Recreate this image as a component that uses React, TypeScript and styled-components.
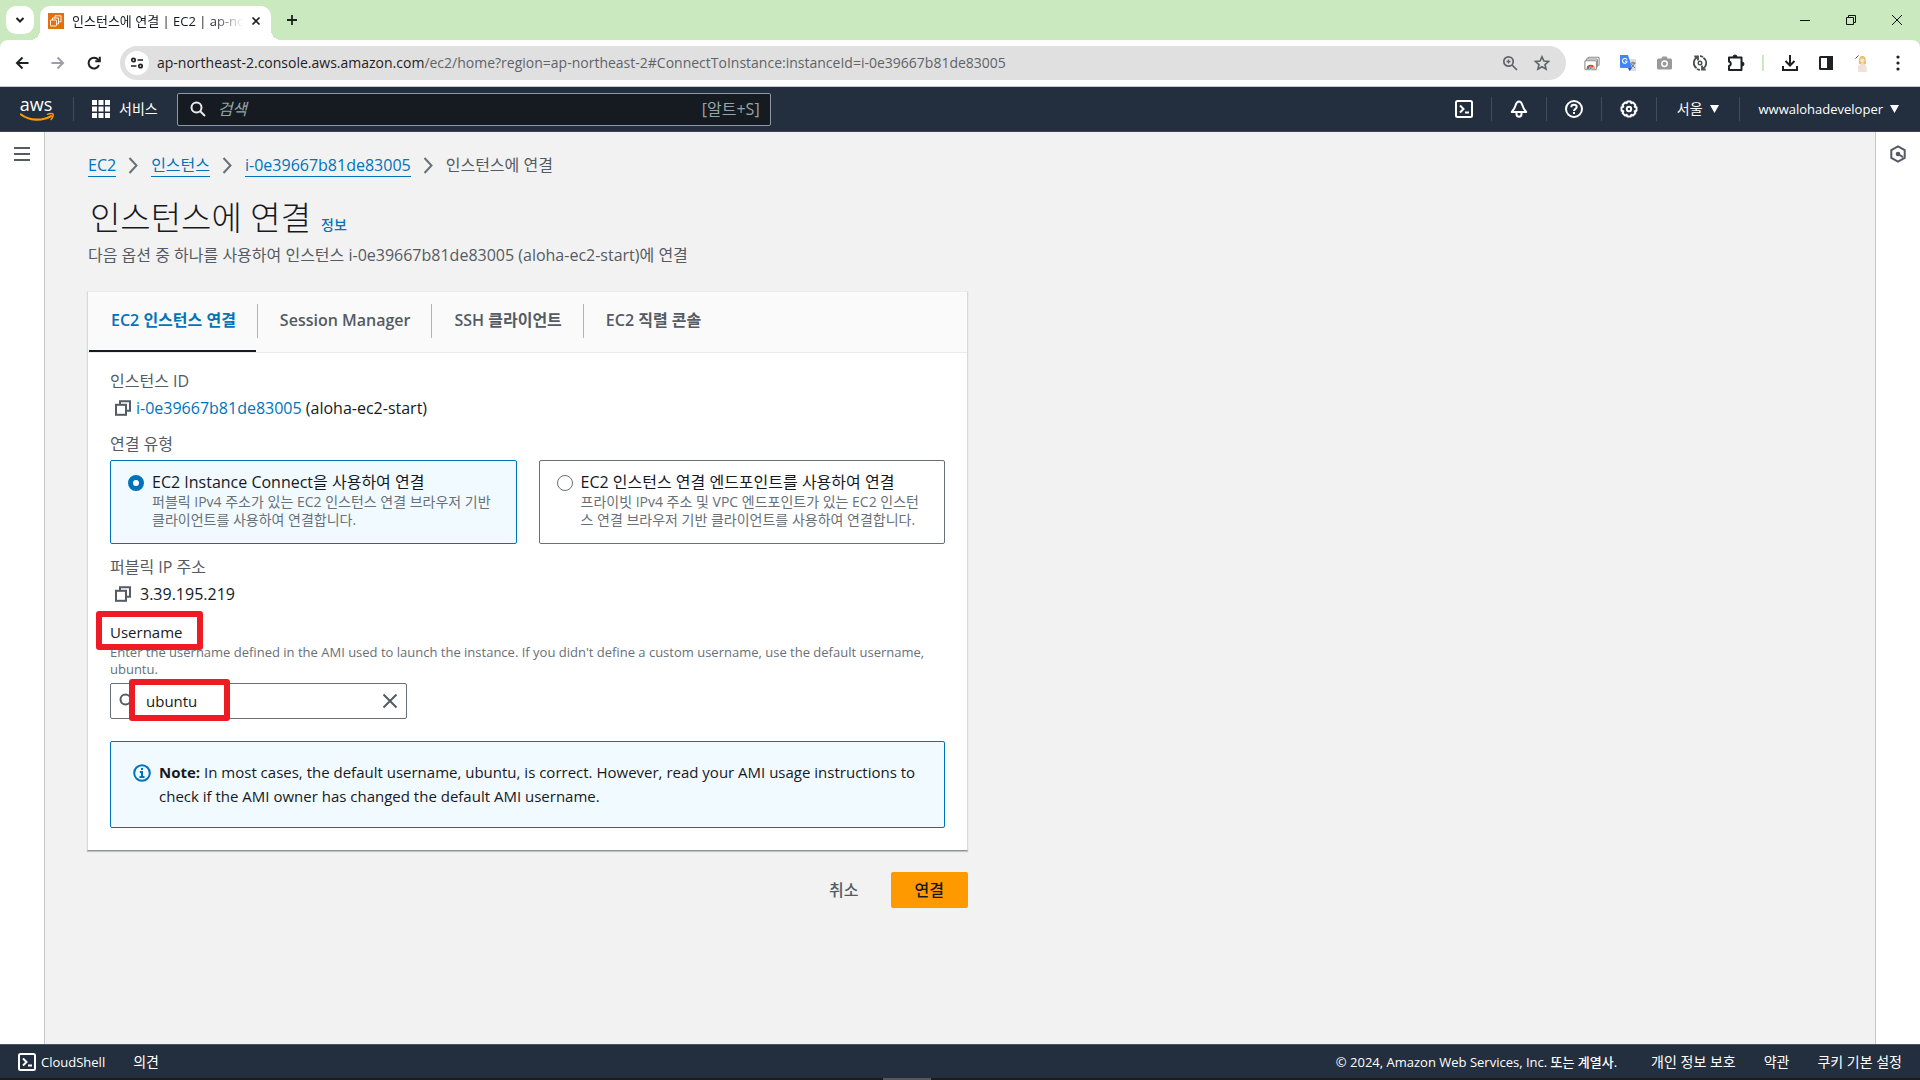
import React, { useState } from "react";
import styled, { createGlobalStyle, css } from "styled-components";

const family = `"Open Sans", "Noto Sans CJK KR", sans-serif`;

const color = {
  link: "#0073bb",
  text: "#16191f",
  muted: "#545b64",
  hint: "#687078",
  navy: "#232f3e",
  page: "#f2f2f2",
  mark: "#ed1c24",
};

const GlobalStyle = createGlobalStyle`
  *, *::before, *::after { box-sizing: border-box; }
  body { margin: 0; background: ${color.page}; color: ${color.text}; font: 16px/22px ${family}; }
  button, input { font: inherit; color: inherit; }
  button { margin: 0; padding: 0; border: 0; background: none; cursor: pointer; }
  svg { display: block; flex: none; }
  h1, p { margin: 0; }
`;

const Window = styled.div`
  display: flex;
  flex-direction: column;
  min-height: 100vh;
`;

/* ---------- browser frame ---------- */

const TabStrip = styled.div`
  display: flex;
  align-items: center;
  height: 40px;
  padding-left: 6px;
  background: #cbe9be;
`;

const TabSearch = styled.button`
  display: grid;
  place-items: center;
  width: 28px;
  height: 28px;
  border-radius: 10px;
  background: #fff;
`;

const BrowserTab = styled.div`
  position: relative;
  display: flex;
  align-items: center;
  align-self: flex-end;
  gap: 8px;
  width: 231px;
  height: 34px;
  margin-left: 6px;
  padding: 0 10px 4px 8px;
  border-radius: 10px 10px 0 0;
  background: #fff;
  font-size: 13px;

  &::before, &::after {
    content: "";
    position: absolute;
    bottom: 0;
    width: 10px;
    height: 10px;
  }
  &::before { right: 100%; background: radial-gradient(circle at 0 0, transparent 10px, #fff 10px); }
  &::after { left: 100%; background: radial-gradient(circle at 100% 0, transparent 10px, #fff 10px); }
`;

const TabTitle = styled.span`
  flex: 1;
  overflow: hidden;
  white-space: nowrap;
  mask-image: linear-gradient(to right, #000 82%, transparent 100%);
`;

const NewTab = styled.button`
  display: grid;
  place-items: center;
  width: 28px;
  height: 28px;
  margin: 0 auto 0 7px;
`;

const WindowButton = styled.button`
  display: grid;
  place-items: center;
  width: 46px;
  height: 40px;
`;

const ToolbarBack = styled.div`
  background: #cbe9be;
`;

const Toolbar = styled.div`
  display: flex;
  align-items: center;
  height: 47px;
  padding: 0 4px;
  border-bottom: 1px solid #c6c9cc;
  border-radius: 8px 8px 0 0;
  background: #fff;
`;

const ToolButton = styled.button`
  display: grid;
  place-items: center;
  width: 36px;
  height: 34px;
`;

const AddressBar = styled.div`
  display: flex;
  align-items: center;
  flex: 1;
  height: 34px;
  margin: 0 8px;
  padding: 0 8px 0 5px;
  border-radius: 17px;
  background: #e0e0e0;
`;

const SiteChip = styled.button`
  display: grid;
  place-items: center;
  width: 24px;
  height: 24px;
  margin-right: 8px;
  border-radius: 50%;
  background: #fff;
`;

const Address = styled.span`
  flex: 1;
  overflow: hidden;
  white-space: nowrap;
  color: #5f6368;
  font-size: 14px;

  b { font-weight: 400; color: #1f2023; }
`;

const BarButton = styled.button`
  display: grid;
  place-items: center;
  width: 32px;
  height: 32px;
`;

const ToolDivider = styled.span`
  width: 2px;
  height: 16px;
  margin: 0 8px;
  background: #cbe9be;
`;

/* ---------- console header ---------- */

const Header = styled.header`
  display: flex;
  align-items: center;
  height: 45px;
  padding: 0 2px 0 19px;
  border-bottom: 1px solid #3b4552;
  background: ${color.navy};
  color: #fff;
`;

const Logo = styled.a`
  display: block;
  margin-right: 18px;
`;

const Divider = styled.span`
  width: 1px;
  height: 24px;
  background: #414d5c;
`;

const ServicesButton = styled.button`
  display: flex;
  align-items: center;
  gap: 9px;
  margin: 0 19px 0 18px;
  font-size: 14px;
`;

const SearchField = styled.label`
  display: flex;
  align-items: center;
  gap: 12px;
  width: 594px;
  height: 33px;
  padding: 0 10px 0 12px;
  border: 1px solid #8d9aa5;
  border-radius: 2px;
  background: #161b21;
  color: #95a5a6;

  input {
    flex: 1;
    min-width: 0;
    padding: 0;
    border: 0;
    outline: 0;
    background: none;
  }
  input::placeholder { color: #95a5a6; font-style: italic; opacity: 1; }
`;

const HeaderTools = styled.div`
  display: flex;
  align-items: center;
  margin-left: auto;
`;

const HeaderButton = styled.button<{ $pad?: number; $strong?: boolean }>`
  display: flex;
  align-items: center;
  justify-content: center;
  gap: 7px;
  min-width: 54px;
  height: 32px;
  padding: 0 ${(p) => p.$pad ?? 0}px;
  font-size: ${(p) => (p.$strong ? 13 : 14)}px;
  font-weight: ${(p) => (p.$strong ? 500 : 400)};
`;

/* ---------- body ---------- */

const Body = styled.div`
  display: flex;
  flex: 1;
`;

const Rail = styled.div<{ $side: "left" | "right" }>`
  display: flex;
  justify-content: center;
  flex: none;
  width: 45px;
  padding-top: 12px;
  background: #fff;
  ${(p) => p.$side === "left"
    ? css`border-right: 1px solid #c5c8ca;`
    : css`border-left: 1px solid #c5c8ca;`}
`;

const RailButton = styled.button`
  display: grid;
  place-items: center;
  width: 20px;
  height: 20px;
`;

const Main = styled.main`
  flex: 1;
  padding: 21px 42px 40px;
`;

const Column = styled.div`
  max-width: 881px;
`;

const Crumbs = styled.nav`
  display: flex;
  align-items: center;
  gap: 12px;
  height: 24px;
  padding-left: 1px;
  color: ${color.muted};

  a {
    border-bottom: 1px solid ${color.link};
    color: ${color.link};
    text-decoration: none;
  }
`;

const TitleRow = styled.div`
  display: flex;
  align-items: baseline;
  gap: 10px;
  margin-top: 21px;
  padding-left: 3px;

  h1 {
    font-size: 33px;
    font-weight: 300;
    line-height: 40px;
  }
  a {
    color: ${color.link};
    font-size: 14px;
    font-weight: 500;
    text-decoration: none;
  }
`;

const Intro = styled.p`
  margin-top: 5px;
  padding-left: 1px;
  color: ${color.muted};
  line-height: 24px;
`;

const Card = styled.section`
  margin-top: 24px;
  border: 1px solid #d5dbdb;
  border-top-color: #eaeded;
  border-bottom-color: #8d9496;
  background: #fff;
  box-shadow: 0 1px 1px rgba(0, 28, 36, 0.2);
`;

const Tabs = styled.div`
  display: flex;
  height: 61px;
  padding-left: 1px;
  border-bottom: 1px solid #eaeded;
  background: #fafafa;
`;

const Tab = styled.button<{ $active?: boolean }>`
  position: relative;
  padding: 0 22px 4px;
  color: ${(p) => (p.$active ? color.link : color.muted)};
  font-weight: 600;
  white-space: nowrap;

  &:not(:last-child)::after {
    content: "";
    position: absolute;
    top: 12px;
    right: 0;
    width: 1px;
    height: 34px;
    background: #aab7b8;
  }
  &::before {
    content: "";
    position: absolute;
    right: 2px;
    bottom: 0;
    left: 0;
    height: 2px;
    background: ${(p) => (p.$active ? color.text : "transparent")};
  }
`;

const Panel = styled.div`
  padding: 17px 22px 22px;
`;

const FieldName = styled.div`
  color: ${color.muted};
`;

const ValueRow = styled.div<{ $gap: number; $after: number }>`
  display: flex;
  align-items: center;
  gap: ${(p) => p.$gap}px;
  margin: 5px 0 ${(p) => p.$after}px;
  padding-left: 5px;

  a { color: ${color.link}; text-decoration: none; }
`;

const Tiles = styled.div`
  display: grid;
  grid-template-columns: 1fr 1fr;
  gap: 22px;
  margin: 5px 0 12px;
`;

const Tile = styled.label<{ $active: boolean }>`
  display: grid;
  grid-template-columns: 16px 1fr;
  column-gap: 8px;
  padding: 10px 17px 14px;
  border: 1px solid ${(p) => (p.$active ? color.link : color.hint)};
  border-radius: 2px;
  background: ${(p) => (p.$active ? "#f1faff" : "#fff")};
  cursor: pointer;
`;

const Radio = styled.input`
  appearance: none;
  width: 16px;
  height: 16px;
  margin: 4px 0 0;
  border: 1px solid ${color.hint};
  border-radius: 50%;
  background: #fff;

  &:checked { border: 5px solid ${color.link}; }
`;

const TileHint = styled.small`
  display: block;
  color: ${color.hint};
  font-size: 14px;
  line-height: 18px;
`;

const UserLabel = styled.label`
  position: relative;
  display: block;
  width: max-content;
  font-size: 15px;
`;

const Mark = styled.span<{ $fill?: boolean }>`
  position: absolute;
  border: 6px solid ${color.mark};
  border-radius: 3px;
  pointer-events: none;
  ${(p) => p.$fill
    ? css`top: -5px; left: 18px; width: 101px; height: 42px; background: #fff;`
    : css`top: -10px; left: -14px; width: 107px; height: 39px; z-index: 1;`}
`;

const Hint = styled.p`
  margin-top: 1px;
  color: ${color.hint};
  font-size: 13px;
  line-height: 17px;
`;

const UserField = styled.div`
  position: relative;
  display: flex;
  align-items: center;
  gap: 7px;
  width: 297px;
  height: 36px;
  margin-top: 5px;
  padding: 0 8px;
  border: 1px solid ${color.hint};
  border-radius: 2px;
  font-size: 15px;

  input {
    position: relative;
    flex: 1;
    min-width: 0;
    padding: 0 0 0 4px;
    border: 0;
    outline: 0;
    background: none;
  }
`;

const Note = styled.div`
  display: flex;
  gap: 8px;
  margin-top: 22px;
  padding: 18px 22px 19px;
  border: 1px solid ${color.link};
  border-radius: 2px;
  background: #f1faff;
  font-size: 15px;
  line-height: 24px;

  svg { margin-top: 4px; }
`;

const Actions = styled.div`
  display: flex;
  justify-content: flex-end;
  gap: 8px;
  margin-top: 21px;
`;

const Action = styled.button<{ $primary?: boolean }>`
  height: 36px;
  padding: 0 24px;
  border-radius: 2px;
  background: ${(p) => (p.$primary ? "#ff9900" : "transparent")};
  color: ${(p) => (p.$primary ? color.text : color.muted)};
  font-weight: 500;
`;

/* ---------- footer ---------- */

const Footer = styled.footer`
  display: flex;
  align-items: center;
  gap: 28px;
  height: 34px;
  padding: 0 18px;
  border-top: 1px solid #4a5562;
  background: ${color.navy};
  color: #fff;
  font-size: 14px;

  a { color: inherit; text-decoration: none; }
  small { margin-left: auto; padding-right: 6px; font-size: 13px; font-weight: 500; }
`;

const ShellButton = styled.button`
  display: flex;
  align-items: center;
  gap: 5px;
  font-size: 13px;
  font-weight: 500;
`;

const TaskbarEdge = styled.div`
  display: flex;
  justify-content: center;
  height: 2px;
  background: #1b1c1f;

  span { width: 48px; margin-right: 106px; background: #55585c; }
`;

/* ---------- icons ---------- */

type IconProps = { size?: number; box?: string; stroke?: string; w?: number; children: React.ReactNode };

const Icon = ({ size = 16, box = "0 0 16 16", stroke = "currentColor", w = 2, children }: IconProps) => (
  <svg width={size} height={size} viewBox={box} fill="none" stroke={stroke} strokeWidth={w} aria-hidden="true">
    {children}
  </svg>
);

const ShellIcon = () => (
  <Icon size={18} box="0 0 18 18">
    <rect x="1" y="1" width="16" height="16" rx="1.5" />
    <path d="M5 5.500 8.500 9 5 12.500M10 12.500h4" />
  </Icon>
);

const CopyIcon = () => (
  <Icon stroke="#545b64">
    <path d="M5 4.500V1.200h10v9.600h-3.500" />
    <rect x="1" y="4.800" width="10" height="10" />
  </Icon>
);

const SearchIcon = ({ tint }: { tint: string }) => (
  <Icon stroke={tint}>
    <circle cx="6.500" cy="6.500" r="5" />
    <path d="m10 10 5 5" />
  </Icon>
);

const Caret = () => (
  <svg width="9" height="8" viewBox="0 0 9 8" fill="currentColor" aria-hidden="true"><path d="M0 0h9L4.500 8z" /></svg>
);

const Chevron = () => (
  <svg width="11" height="17" viewBox="0 0 11 17" fill="none" stroke="#687078" strokeWidth="2" aria-hidden="true">
    <path d="m1.500 1 7 7.500-7 7.500" />
  </svg>
);

const AwsLogo = () => (
  <svg width="36" height="32" viewBox="0 -8 36 32" aria-hidden="true">
    <text x="17" y="10" textAnchor="middle" fill="#fff" fontFamily="Open Sans, sans-serif" fontSize="18" fontWeight="500">aws</text>
    <path d="M2 13.500c8.500 6.500 21 6.800 30 1.600" fill="none" stroke="#f90" strokeWidth="2.200" strokeLinecap="round" />
    <path d="M28.500 13.300c2-1 4.800-1 5.500-.2.500 1-.3 3.800-1.900 5.400" fill="none" stroke="#f90" strokeWidth="1.500" strokeLinecap="round" />
  </svg>
);

const Favicon = () => (
  <svg width="16" height="16" viewBox="0 0 16 16" aria-hidden="true">
    <rect width="16" height="16" fill="#e2700f" />
    <g fill="none" stroke="#fff" strokeWidth="0.900">
      <rect x="2.500" y="7" width="6" height="6" rx="0.500" />
      <path d="M4.500 7V5h6v6h-2M7 5V2.800h6v6h-2.500" />
    </g>
  </svg>
);

const Extensions = () => (
  <>
    <ToolButton aria-label="Screenshots">
      <svg width="16" height="15" viewBox="0 0 18 16" fill="#fff" stroke="#8b8b8b" strokeWidth="1.200">
        <rect x="4.500" y="1" width="12.500" height="9" rx="1" />
        <rect x="2.500" y="3" width="12.500" height="9" rx="1" />
        <rect x="1" y="5" width="13" height="10" rx="1" />
        <path d="M3 14a4.500 4.500 0 0 1 9 0z" fill="#e33b2e" stroke="none" />
        <path d="M3 14a4.500 4.500 0 0 1 1.500-3.200L7 14z" fill="#2d9d4c" stroke="none" />
        <path d="M8 14h4a4.500 4.500 0 0 0-1.300-3z" fill="#f8c51c" stroke="none" />
        <circle cx="7.500" cy="13.200" r="1.600" fill="#4285f4" stroke="#fff" strokeWidth="0.500" />
      </svg>
    </ToolButton>
    <ToolButton aria-label="Translate">
      <svg width="17" height="17" viewBox="0 0 17 17">
        <path d="M6 4h10v12H9z" fill="#dadce0" />
        <path d="M0 0h8l4 13H1a1 1 0 0 1-1-1z" fill="#4285f4" />
        <path d="M8 13h4l-2.500 3z" fill="#2457b8" />
        <path d="M7.200 6.300H5M7 4.800a2.400 2.400 0 1 0 .2 1.500" fill="none" stroke="#fff" strokeWidth="1.100" />
        <path d="M10.500 8h5M13 6.800V8M14.500 8c-.5 2-1.800 3.500-3 4.300M11.500 9c.6 1.400 2 3 3.300 3.800" fill="none" stroke="#5f6368" strokeWidth="0.900" />
      </svg>
    </ToolButton>
    <ToolButton aria-label="Camera">
      <svg width="15" height="14" viewBox="0 0 15 14">
        <path d="M1.500 2.500h2.800L5.500.500h4l1.200 2h2.800A1.500 1.500 0 0 1 15 4v8a1.500 1.500 0 0 1-1.500 1.500h-12A1.500 1.500 0 0 1 0 12V4a1.500 1.500 0 0 1 1.500-1.500z" fill="#9a9a9a" />
        <circle cx="7.500" cy="7.800" r="2.700" fill="none" stroke="#fff" strokeWidth="1.500" />
      </svg>
    </ToolButton>
    <ToolButton aria-label="Refresher">
      <Icon stroke="#4d4f52" w={1.8}>
        <path d="M4.600 13.200A6.300 6.300 0 0 1 5 2.500M2.300 1.500h3.700v4" />
        <path d="M11.400 2.800A6.300 6.300 0 0 1 11 13.500M13.700 14.500H10v-4" />
        <path d="M8 1.200a6.800 6.800 0 0 1 3 .8M8 14.800a6.800 6.800 0 0 1-3-.8" />
        <circle cx="8" cy="8" r="1.800" strokeWidth="1.400" />
      </Icon>
    </ToolButton>
    <ToolButton aria-label="Extensions">
      <Icon size={18} box="0 0 18 18" stroke="#1f2023">
        <path d="M2 3.500h12.500v12.500H2v-4a2.300 2.300 0 0 0 0-4.500z" strokeLinejoin="round" />
        <path d="M6 3a2 2 0 0 1 4 0zM15 8a2 2 0 0 1 0 4z" fill="#1f2023" strokeWidth="1" />
      </Icon>
    </ToolButton>
  </>
);

const BrowserFrame = () => (
  <>
    <TabStrip>
      <TabSearch aria-label="Search tabs">
        <Icon size={10} box="0 0 10 10" stroke="#1f2023"><path d="m1.500 3 3.500 3.500L8.500 3" /></Icon>
      </TabSearch>
      <BrowserTab>
        <Favicon />
        <TabTitle>인스턴스에 연결 | EC2 | ap-northeast-2</TabTitle>
        <button aria-label="Close tab">
          <Icon size={10} box="0 0 10 10" stroke="#1f2023" w={1.7}><path d="m1.500 1.500 7 7m0-7-7 7" /></Icon>
        </button>
      </BrowserTab>
      <NewTab aria-label="New tab">
        <Icon size={12} box="0 0 12 12" stroke="#1f2023" w={1.8}><path d="M6 1v10M1 6h10" /></Icon>
      </NewTab>
      <WindowButton aria-label="Minimize">
        <Icon size={10} box="0 0 10 10" stroke="#111" w={1}><path d="M0 5.500h10" /></Icon>
      </WindowButton>
      <WindowButton aria-label="Restore">
        <Icon size={10} box="0 0 10 10" stroke="#111" w={1}>
          <path d="M.5 2.500h7v7h-7zM2.500 2.500v-2h7v7h-2" />
        </Icon>
      </WindowButton>
      <WindowButton aria-label="Close">
        <Icon size={10} box="0 0 10 10" stroke="#111" w={1}><path d="m0 0 10 10m0-10L0 10" /></Icon>
      </WindowButton>
    </TabStrip>
    <ToolbarBack>
      <Toolbar>
        <ToolButton aria-label="Back">
          <Icon size={14} box="0 0 14 14" stroke="#1f2023"><path d="M13.500 7H2M7.500 1.500 2 7l5.500 5.500" /></Icon>
        </ToolButton>
        <ToolButton aria-label="Forward">
          <Icon size={14} box="0 0 14 14" stroke="#9aa0a6"><path d="M.5 7H12M6.500 1.500 12 7l-5.500 5.500" /></Icon>
        </ToolButton>
        <ToolButton aria-label="Reload">
          <Icon size={14} box="0 0 14 14" stroke="#1f2023">
            <path d="M12 9.200A5.400 5.400 0 1 1 11.200 3.600L12.500 5" />
            <path d="M12.800.8v4.500H8.300" />
          </Icon>
        </ToolButton>
        <AddressBar>
          <SiteChip aria-label="Site information">
            <Icon size={14} box="0 0 14 14" stroke="#1f2023" w={1.7}>
              <circle cx="3.500" cy="4" r="1.700" /><path d="M7.500 4H13M1 10h5.500" /><circle cx="10.500" cy="10" r="1.700" />
            </Icon>
          </SiteChip>
          <Address>
            <b>ap-northeast-2.console.aws.amazon.com</b>/ec2/home?region=ap-northeast-2#ConnectToInstance:instanceId=i-0e39667b81de83005
          </Address>
          <BarButton aria-label="Zoom">
            <Icon stroke="#5f6368" w={1.7}>
              <circle cx="6.500" cy="6.500" r="4.700" /><path d="m10 10 5 5" /><path d="M6.500 4.500v4M4.500 6.500h4" strokeWidth="1.300" />
            </Icon>
          </BarButton>
          <BarButton aria-label="Bookmark">
            <Icon stroke="#5f6368" w={1.6}>
              <path d="m8 1.800 1.900 4.300 4.700.4-3.600 3.100 1.100 4.600L8 11.800l-4.100 2.400L5 9.600 1.400 6.500l4.700-.4z" />
            </Icon>
          </BarButton>
        </AddressBar>
        <Extensions />
        <ToolDivider />
        <ToolButton aria-label="Downloads">
          <Icon stroke="#1f2023"><path d="M8 0v10M3.500 6 8 10.500 12.500 6M1 11v4h14v-4" /></Icon>
        </ToolButton>
        <ToolButton aria-label="Side panel">
          <Icon size={14} box="0 0 14 14" stroke="#1f2023">
            <rect x="1" y="1" width="12" height="12" rx="0.500" /><path d="M9 1h4v12H9z" fill="#1f2023" />
          </Icon>
        </ToolButton>
        <ToolButton aria-label="Profile">
          <svg width="18" height="18" viewBox="0 0 18 18">
            <path d="M2.500 4.500 5.500 1.500" stroke="#555" strokeWidth="1" />
            <path d="M6 9.500c-.5-5.500.8-7.500 3.300-7.500s4 2 3.400 7.500l-.7 1H7z" fill="#e5bf62" />
            <circle cx="9.300" cy="6.500" r="2.200" fill="#fbe3d2" />
            <path d="M5 12l4-2 4.500 2 .5 6H5z" fill="#efe2dc" />
            <path d="m8 9 1.300 3L11 9z" fill="#fbd9c4" />
          </svg>
        </ToolButton>
        <ToolButton aria-label="Menu">
          <svg width="4" height="16" viewBox="0 0 4 16" fill="#1f2023">
            <circle cx="2" cy="2" r="1.600" /><circle cx="2" cy="8" r="1.600" /><circle cx="2" cy="14" r="1.600" />
          </svg>
        </ToolButton>
      </Toolbar>
    </ToolbarBack>
  </>
);

const ConsoleHeader = () => (
  <Header>
    <Logo href="#home" aria-label="AWS"><AwsLogo /></Logo>
    <Divider />
    <ServicesButton>
      <svg width="18" height="18" viewBox="0 0 18 18" fill="#fff" aria-hidden="true">
        {[0, 6.5, 13].map((y) => [0, 6.5, 13].map((x) => <rect key={`${x}-${y}`} x={x} y={y} width="5" height="5" />))}
      </svg>
      서비스
    </ServicesButton>
    <SearchField>
      <SearchIcon tint="#e9ebed" />
      <input type="text" placeholder="검색" aria-label="검색" />
      <span>[알트+S]</span>
    </SearchField>
    <HeaderTools>
      <HeaderButton aria-label="CloudShell"><ShellIcon /></HeaderButton>
      <Divider />
      <HeaderButton aria-label="Notifications">
        <Icon size={18} box="0 0 18 18">
          <path d="M9 1.500C7 1.500 6.200 3 5.500 5.500 4.800 8.300 3.500 10 1.800 12h14.400c-1.700-2-3-3.700-3.700-6.500C11.800 3 11 1.500 9 1.500z" strokeLinejoin="round" />
          <path d="M6.500 12.500v1.700a2.500 2.500 0 0 0 5 0v-1.700" />
        </Icon>
      </HeaderButton>
      <Divider />
      <HeaderButton aria-label="Help">
        <Icon size={18} box="0 0 18 18">
          <circle cx="9" cy="9" r="8" />
          <path d="M6.300 7.200C6.300 5.700 7.500 4.800 9 4.800s2.700.9 2.700 2.300C11.700 8.800 9 8.900 9 11M9 12v2" />
        </Icon>
      </HeaderButton>
      <Divider />
      <HeaderButton aria-label="Settings">
        <Icon size={18} box="0 0 18 18">
          <path d="M7.300 1.500h3.400l.6 1.700 1.700-.7 2.400 2.400-.7 1.800 1.800.6v3.400l-1.800.6.7 1.800-2.400 2.400-1.700-.7-.6 1.700H7.300l-.6-1.700-1.700.7-2.400-2.400.7-1.800-1.800-.6V7.300l1.800-.6-.7-1.800L5 2.500l1.700.7z" strokeLinejoin="round" />
          <circle cx="9" cy="9" r="2.200" />
        </Icon>
      </HeaderButton>
      <Divider />
      <HeaderButton $pad={20}><span>서울</span><Caret /></HeaderButton>
      <Divider />
      <HeaderButton $pad={19} $strong><span>wwwalohadeveloper</span><Caret /></HeaderButton>
    </HeaderTools>
  </Header>
);

const options = [
  {
    id: "direct",
    title: "EC2 Instance Connect을 사용하여 연결",
    hint: "퍼블릭 IPv4 주소가 있는 EC2 인스턴스 연결 브라우저 기반 클라이언트를 사용하여 연결합니다.",
  },
  {
    id: "endpoint",
    title: "EC2 인스턴스 연결 엔드포인트를 사용하여 연결",
    hint: "프라이빗 IPv4 주소 및 VPC 엔드포인트가 있는 EC2 인스턴스 연결 브라우저 기반 클라이언트를 사용하여 연결합니다.",
  },
];

const tabs = ["EC2 인스턴스 연결", "Session Manager", "SSH 클라이언트", "EC2 직렬 콘솔"];

const ConnectCard = () => {
  const [tab, setTab] = useState(0);
  const [kind, setKind] = useState("direct");
  const [user, setUser] = useState("ubuntu");

  return (
    <Card>
      <Tabs role="tablist">
        {tabs.map((name, i) => (
          <Tab key={name} role="tab" aria-selected={i === tab} $active={i === tab} onClick={() => setTab(i)}>{name}</Tab>
        ))}
      </Tabs>
      <Panel>
        <FieldName>인스턴스 ID</FieldName>
        <ValueRow $gap={5} $after={14}>
          <button aria-label="Copy instance ID"><CopyIcon /></button>
          <span><a href="#instance">i-0e39667b81de83005</a> (aloha-ec2-start)</span>
        </ValueRow>
        <FieldName id="kind">연결 유형</FieldName>
        <Tiles role="radiogroup" aria-labelledby="kind">
          {options.map((o) => (
            <Tile key={o.id} $active={kind === o.id}>
              <Radio type="radio" name="kind" checked={kind === o.id} onChange={() => setKind(o.id)} />
              <span>{o.title}<TileHint>{o.hint}</TileHint></span>
            </Tile>
          ))}
        </Tiles>
        <FieldName>퍼블릭 IP 주소</FieldName>
        <ValueRow $gap={9} $after={16}>
          <button aria-label="Copy IP address"><CopyIcon /></button>
          <span>3.39.195.219</span>
        </ValueRow>
        <UserLabel htmlFor="user">Username<Mark /></UserLabel>
        <Hint>
          Enter the username defined in the AMI used to launch the instance. If you didn't define a custom username, use the default username, ubuntu.
        </Hint>
        <UserField>
          <SearchIcon tint="#545b64" />
          <Mark $fill />
          <input id="user" type="text" value={user} onChange={(e) => setUser(e.target.value)} />
          <button aria-label="Clear" onClick={() => setUser("")}>
            <Icon stroke="#545b64"><path d="m1.500 1.500 13 13m0-13-13 13" /></Icon>
          </button>
        </UserField>
        <Note>
          <Icon size={18} box="0 0 18 18" stroke={color.link}>
            <circle cx="9" cy="9" r="7.800" />
            <path d="M9 4v2M6.800 8H9v5M6.500 13h5" />
          </Icon>
          <p>
            <b>Note:</b> In most cases, the default username, ubuntu, is correct. However, read your AMI usage instructions to check if the AMI owner has changed the default AMI username.
          </p>
        </Note>
      </Panel>
    </Card>
  );
};

export default function App() {
  return (
    <Window>
      <GlobalStyle />
      <BrowserFrame />
      <ConsoleHeader />
      <Body>
        <Rail $side="left">
          <RailButton aria-label="Open navigation">
            <Icon stroke="#545b64"><path d="M0 2h16M0 8h16M0 14h16" /></Icon>
          </RailButton>
        </Rail>
        <Main>
          <Column>
            <Crumbs>
              <a href="#ec2">EC2</a><Chevron />
              <a href="#instances">인스턴스</a><Chevron />
              <a href="#instance">i-0e39667b81de83005</a><Chevron />
              <span>인스턴스에 연결</span>
            </Crumbs>
            <TitleRow>
              <h1>인스턴스에 연결</h1>
              <a href="#info">정보</a>
            </TitleRow>
            <Intro>다음 옵션 중 하나를 사용하여 인스턴스 i-0e39667b81de83005 (aloha-ec2-start)에 연결</Intro>
            <ConnectCard />
            <Actions>
              <Action>취소</Action>
              <Action $primary>연결</Action>
            </Actions>
          </Column>
        </Main>
        <Rail $side="right">
          <RailButton aria-label="Open tools">
            <Icon size={18} box="0 0 18 18" stroke="#545b64">
              <path d="M9 1.300 15.700 5v8L9 16.700 2.300 13V5z" /><path d="m9 9 5 3.200" /><circle cx="9" cy="9" r="1.300" fill="#545b64" />
            </Icon>
          </RailButton>
        </Rail>
      </Body>
      <Footer>
        <ShellButton><ShellIcon />CloudShell</ShellButton>
        <a href="#feedback">의견</a>
        <small>© 2024, Amazon Web Services, Inc. 또는 계열사.</small>
        <a href="#privacy">개인 정보 보호</a>
        <a href="#terms">약관</a>
        <a href="#cookies">쿠키 기본 설정</a>
      </Footer>
      <TaskbarEdge><span /></TaskbarEdge>
    </Window>
  );
}
